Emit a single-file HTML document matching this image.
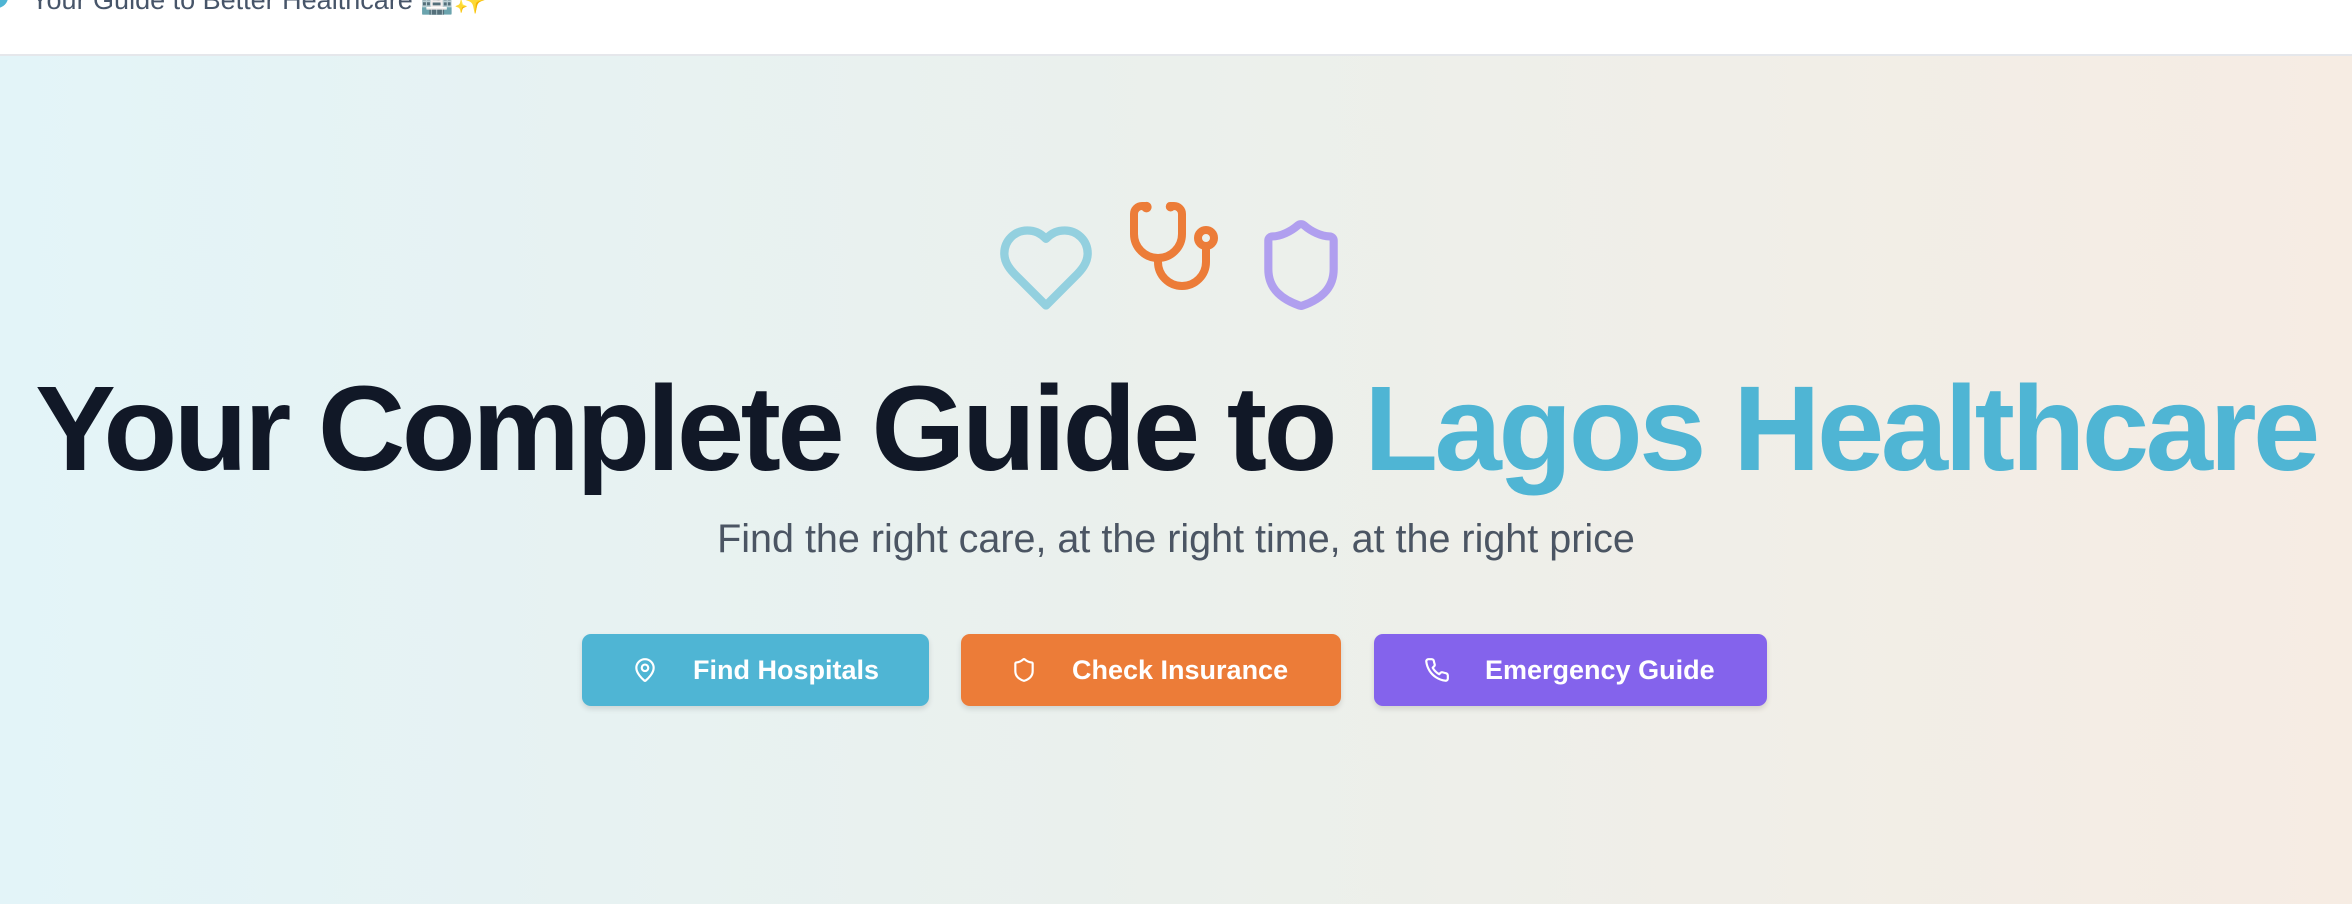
<!DOCTYPE html>
<html><head><meta charset="utf-8"><style>
*{margin:0;padding:0;box-sizing:border-box}
body{width:2352px;height:904px;overflow:hidden;font-family:"Liberation Sans",sans-serif;background:linear-gradient(90deg,#e3f4f8 0%,#ebf0ec 50%,#f6ece3 100%)}
.hdr{position:absolute;left:0;top:0;width:2352px;height:56px;background:#fff;border-bottom:2px solid #e5e7eb}
.hdr .dot{position:absolute;left:-14px;top:-14px;width:22px;height:22px;border-radius:50%;background:#4fb5d4}
.hdr .t{position:absolute;left:31px;top:-16px;font-size:27px;color:#475569;white-space:nowrap}
.icons svg{position:absolute;fill:none;stroke-width:2;stroke-linecap:round;stroke-linejoin:round}
h1{position:absolute;left:0;width:2352px;top:358px;text-align:center;font-size:121px;font-weight:700;color:#111827;letter-spacing:-3.5px;white-space:nowrap}
h1 span{color:#4fb5d4}
.sub{position:absolute;left:0;width:2352px;top:517px;text-align:center;font-size:39.5px;color:#4b5563}
.btn{position:absolute;top:634px;height:72px;border-radius:9px;color:#fff;font-size:27px;font-weight:700;display:flex;align-items:center;box-shadow:0 3px 6px rgba(0,0,0,.12)}
.btn svg{position:absolute;left:50px;top:23px;width:26px;height:26px;fill:none;stroke:#fff;stroke-width:2;stroke-linecap:round;stroke-linejoin:round}
.btn b{position:absolute;left:111px;top:21px;font-weight:700}
</style></head><body>
<div class="hdr"><div class="dot"></div><div class="t">Your Guide to Better Healthcare 🏥✨</div></div>
<div class="icons">
<svg style="left:996px;top:218px" width="100" height="100" viewBox="0 0 24 24" stroke="#93d0df"><path d="M19 14c1.49-1.46 3-3.21 3-5.5A5.5 5.5 0 0 0 16.5 3c-1.76 0-3 .5-4.5 2-1.5-1.5-2.74-2-4.5-2A5.5 5.5 0 0 0 2 8.5c0 2.3 1.5 4.05 3 5.5l7 7Z"/></svg>
<svg style="left:1126px;top:198px" width="96" height="96" viewBox="0 0 24 24" stroke="#ec7c38"><path d="M4.8 2.3A.3.3 0 1 0 5 2H4a2 2 0 0 0-2 2v5a6 6 0 0 0 6 6 6 6 0 0 0 6-6V4a2 2 0 0 0-2-2h-1a.2.2 0 1 0 .3.3"/><path d="M8 15v1a6 6 0 0 0 6 6 6 6 0 0 0 6-6v-4"/><circle cx="20" cy="10" r="2"/></svg>
<svg style="left:1252px;top:216px" width="98" height="98" viewBox="0 0 24 24" stroke="#b09fef"><path d="M20 13c0 5-3.5 7.5-7.66 8.95a1 1 0 0 1-.67-.01C7.5 20.5 4 18 4 13V6a1 1 0 0 1 1-1c2 0 4.5-1.2 6.24-2.72a1.17 1.17 0 0 1 1.52 0C14.51 3.81 17 5 19 5a1 1 0 0 1 1 1z"/></svg>
</div>
<h1>Your Complete Guide to <span>Lagos Healthcare</span></h1>
<div class="sub">Find the right care, at the right time, at the right price</div>
<div class="btn" style="left:582px;width:347px;background:#4fb5d4"><svg viewBox="0 0 24 24"><path d="M20 10c0 5-5.5 10.2-7.4 11.8a1 1 0 0 1-1.2 0C9.5 20.2 4 15 4 10a8 8 0 0 1 16 0"/><circle cx="12" cy="10" r="3"/></svg><b>Find Hospitals</b></div>
<div class="btn" style="left:961px;width:380px;background:#ec7c38"><svg viewBox="0 0 24 24"><path d="M20 13c0 5-3.5 7.5-7.66 8.95a1 1 0 0 1-.67-.01C7.5 20.5 4 18 4 13V6a1 1 0 0 1 1-1c2 0 4.5-1.2 6.24-2.72a1.17 1.17 0 0 1 1.52 0C14.51 3.81 17 5 19 5a1 1 0 0 1 1 1z"/></svg><b>Check Insurance</b></div>
<div class="btn" style="left:1374px;width:393px;background:#8463ec"><svg viewBox="0 0 24 24"><path d="M22 16.9v3a2 2 0 0 1-2.2 2 19.8 19.8 0 0 1-8.6-3.1 19.5 19.5 0 0 1-6-6A19.8 19.8 0 0 1 2.1 4.2 2 2 0 0 1 4.1 2h3a2 2 0 0 1 2 1.7c.1 1 .4 1.9.7 2.8a2 2 0 0 1-.5 2.1L8 9.9a16 16 0 0 0 6 6l1.3-1.3a2 2 0 0 1 2.1-.4c.9.3 1.8.6 2.8.7a2 2 0 0 1 1.7 2z"/></svg><b>Emergency Guide</b></div>
</body></html>
